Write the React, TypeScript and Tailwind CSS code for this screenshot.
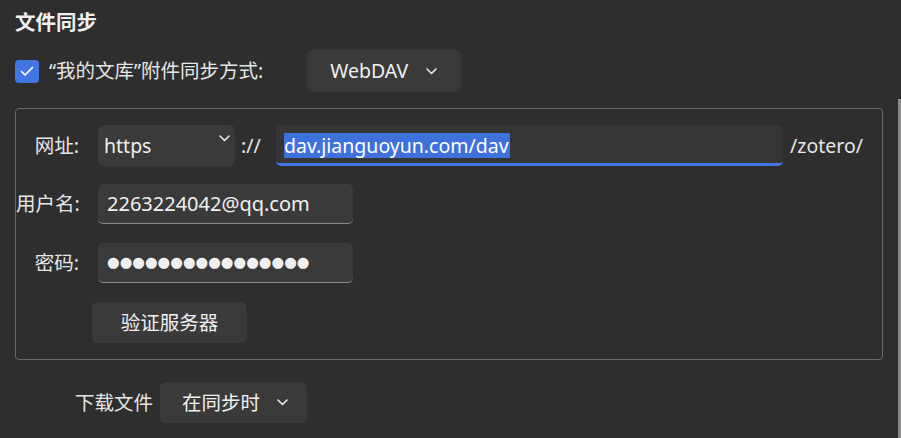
import React from "react";

const Chevron = ({ className = "" }: { className?: string }) => (
  <svg width="11" height="7" viewBox="0 0 11 7" className={className}>
    <polyline
      points="1,1 5.5,5.5 10,1"
      fill="none"
      stroke="#e8e8e8"
      strokeWidth="1.6"
      strokeLinecap="round"
      strokeLinejoin="round"
    />
  </svg>
);

export default function App() {
  return (
    <div className="w-[901px] h-[438px] bg-[#2e2e2e] flex overflow-hidden text-[#f0f0f0] font-['Noto_Sans','Noto_Sans_CJK_SC',sans-serif] text-[19.5px]">
      <div className="flex-1 pl-[15px] pt-[8px]">
        {/* Title */}
        <h1 className="text-[20.5px] font-bold leading-[28px]">文件同步</h1>

        {/* Sync method */}
        <div className="mt-[14px] flex items-center h-[42px]">
          <div className="w-[24px] h-[23px] rounded-[4px] bg-[#4175e3] flex items-center justify-center">
            <svg width="14" height="11" viewBox="0 0 14 11">
              <polyline
                points="1.5,5.5 5,9 12.5,1.5"
                fill="none"
                stroke="#ffffff"
                strokeWidth="1.7"
                strokeLinecap="round"
                strokeLinejoin="round"
              />
            </svg>
          </div>
          <span className="ml-[10px] text-[#e6e6e6]">“我的文库”附件同步方式:</span>
          <button className="ml-[44px] h-[42px] w-[154px] rounded-[6px] bg-[#3a3a3a] flex items-center pl-[23px]">
            <span>WebDAV</span>
            <Chevron className="ml-[18px]" />
          </button>
        </div>

        {/* WebDAV settings */}
        <div className="mt-[16px] w-[868px] border border-[#6b6b6b] rounded-[4px] pt-[16px] pb-[16px]">
          <div className="flex items-center h-[41px]">
            <span className="w-[63px] text-right whitespace-nowrap text-[#e6e6e6]">网址:</span>
            <div className="ml-[19px] w-[137px] h-[41px] rounded-[6px] bg-[#3a3a3a] flex items-start pl-[6px]">
              <span className="self-center">https</span>
              <Chevron className="ml-auto mr-[5px] mt-[10px]" />
            </div>
            <span className="ml-[6px] w-[29px] text-[#e6e6e6]">://</span>
            <div className="ml-[6px] w-[507px] h-[41px] rounded-[5px] bg-[#353535] border-b-[3px] border-[#4175e3] flex items-center pl-[8px] pt-[2px]">
              <span className="bg-[#3f71dc] leading-[25px] text-white pr-[1px]">dav.jianguoyun.com/dav</span>
            </div>
            <span className="ml-[7px] text-[#e6e6e6]">/zotero/</span>
          </div>

          <div className="mt-[18px] flex items-center h-[40px]">
            <span className="w-[63px] text-right whitespace-nowrap text-[#e6e6e6]">用户名:</span>
            <div className="ml-[19px] w-[255px] h-[40px] rounded-[5px] bg-[#3a3a3a] border-b border-[#8a8a8a] flex items-center pl-[9px] text-[20px]">
              2263224042@qq.com
            </div>
          </div>

          <div className="mt-[19px] flex items-center h-[40px]">
            <span className="w-[63px] text-right whitespace-nowrap text-[#e6e6e6]">密码:</span>
            <div className="ml-[19px] w-[255px] h-[40px] rounded-[5px] bg-[#3a3a3a] border-b border-[#8a8a8a] flex items-center pl-[9px] text-[14.5px] font-['DejaVu_Sans',sans-serif]">
              ●●●●●●●●●●●●●●●●
            </div>
          </div>

          <button className="mt-[19px] ml-[76px] h-[41px] w-[155px] rounded-[6px] bg-[#3a3a3a] flex items-center justify-center">
            验证服务器
          </button>
        </div>

        {/* Download files */}
        <div className="mt-[22px] flex items-center h-[41px]">
          <span className="ml-[60px] text-[#e6e6e6]">下载文件</span>
          <button className="ml-[7px] h-[41px] w-[147px] rounded-[6px] bg-[#3a3a3a] flex items-center pl-[22px]">
            <span>在同步时</span>
            <Chevron className="ml-[17px]" />
          </button>
        </div>
      </div>

      {/* Scrollbar */}
      <div className="w-[6px] pt-[99px] flex justify-end">
        <div className="w-[3px] h-full bg-[#8a8a8a]" />
      </div>
    </div>
  );
}
